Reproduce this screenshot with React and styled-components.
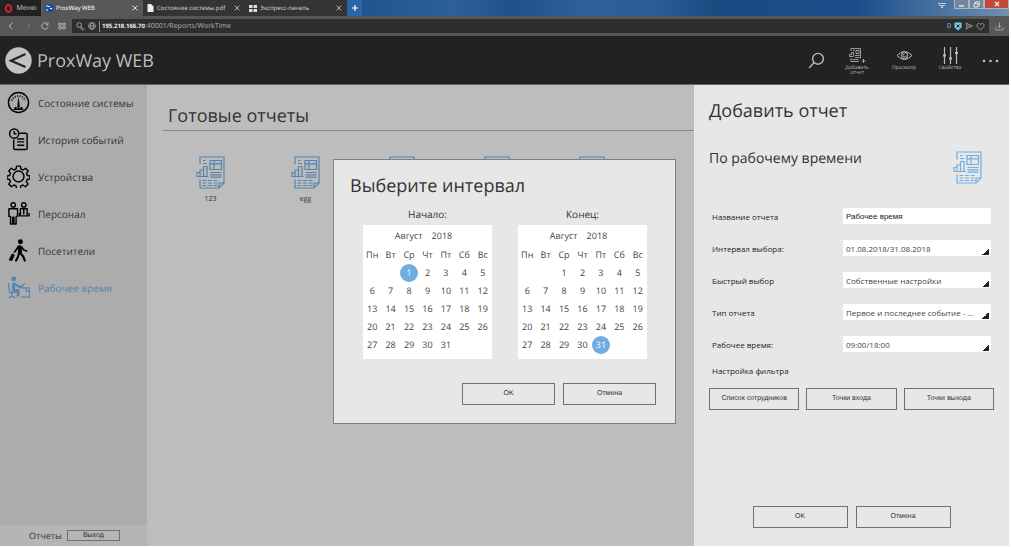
import React, { useState } from "react";
import styled, { createGlobalStyle } from "styled-components";

const GlobalStyle = createGlobalStyle`
    * {
        box-sizing: border-box;
    }
    html, body, #root {
        height: 100%;
        margin: 0;
    }
    body {
        background: #fff;
        color: #333;
        font-family: "Open Sans", "Noto Sans", sans-serif;
        font-size: 10px;
        text-rendering: geometricPrecision;
    }
    button, input, select {
        font-family: inherit;
        color: inherit;
        text-rendering: inherit;
    }
    a {
        color: inherit;
        text-decoration: none;
    }
    svg {
        flex-shrink: 0;
    }
`;

const Window = styled.div`
    display: flex;
    flex-direction: column;
    min-height: 100%;
    padding: 0 2px 1px 0;
`;

/* browser frame */

const TabBar = styled.div`
    display: flex;
    height: 16px;
    background: linear-gradient(90deg, #255e9e 0, #1f5690 36%, #2c6097 45%, #1f5288 51%, #2e6298 58%, #2c5c94 65%, #1a4a80 71%, #1c4e8c 85%, #6f90b2 100%);
    color: #bbb;
    font-family: "Noto Sans", sans-serif;
    font-size: 6px;
`;

const PlainButton = styled.button`
    display: flex;
    align-items: center;
    justify-content: center;
    padding: 0;
    border: 0;
    background: none;
    color: inherit;
`;

const OperaMenu = styled(PlainButton)`
    width: 41px;
    gap: 3px;
    background: #222;
    font-size: 7px;
`;

const Tab = styled.div`
    display: flex;
    align-items: center;
    gap: 3px;
    width: 102px;
    padding: 0 5px 0 4px;
    background: ${({ $active }) => ($active ? "#575757" : "#343434")};
    color: ${({ $active }) => ($active ? "#fff" : "#ccc")};
    white-space: nowrap;

    button {
        margin-left: auto;
    }
`;

const NewTab = styled(PlainButton)`
    width: 15px;
    background: #2b66a8;
    color: #fff;
`;

const WindowControls = styled.div`
    display: flex;
    align-items: flex-start;
    margin-left: auto;
    color: #e5e5e5;
`;

const TabMenu = styled(PlainButton)`
    width: 12px;
    height: 10px;
    margin-right: 6px;
`;

const WindowButton = styled(PlainButton)`
    width: ${({ $close }) => ($close ? "25px" : "15px")};
    height: 9px;
    background: ${({ $close }) => ($close ? "#c4473a" : "#71879f")};
    border: 1px solid #a9b6c4;
    border-top: 0;
`;

const AddressBar = styled.div`
    display: flex;
    align-items: center;
    height: 20px;
    padding: 0 5px 0 2px;
    background: #575757;
    color: #aaa;
`;

const NavButton = styled(PlainButton)`
    width: 17px;
    height: 18px;
    color: ${({ disabled }) => (disabled ? "#777" : "#bbb")};
`;

const Address = styled.div`
    display: flex;
    flex: 1;
    align-items: center;
    gap: 3px;
    height: 14px;
    margin: 0 6px 0 2px;
    padding: 0 4px;
    background: #2d2f2e;
    font-family: "Noto Sans", sans-serif;
    font-size: 7px;

    strong {
        color: #eee;
        font-size: 6px;
    }
    span {
        flex: 1;
        padding-left: 2px;
        border-left: 1px solid #888;
        line-height: 10px;
    }
    em {
        color: #6fc1ea;
        font-style: normal;
    }
`;

/* application */

const Page = styled.div`
    position: relative;
    display: flex;
    flex: 1;
    flex-direction: column;
`;

const Header = styled.header`
    display: flex;
    align-items: center;
    height: 49px;
    padding: 1px 10px 0 5px;
    background: #222;
    border-bottom: 1px solid #666;
    color: #bdbdbd;
`;

const Brand = styled.a`
    display: flex;
    align-items: center;
    gap: 5px;
    margin-right: auto;
    font-size: 18px;
`;

const Tool = styled(PlainButton)`
    flex-direction: column;
    justify-content: flex-start;
    width: ${({ $width }) => $width || "46px"};
    height: 28px;
    gap: 2px;
    font-size: 5px;
    line-height: 5px;
`;

const Search = styled(PlainButton)`
    width: 22px;
    margin-right: 6px;
`;

const More = styled(PlainButton)`
    margin-left: 9px;
`;

const Body = styled.div`
    display: flex;
    flex: 1;
`;

const Sidebar = styled.aside`
    display: flex;
    flex-direction: column;
    width: 147px;
    background: #acacac;
`;

const Menu = styled.nav`
    flex: 1;
    margin-top: -1px;
`;

const MenuItem = styled.a`
    display: flex;
    align-items: center;
    gap: 8px;
    height: 37px;
    padding-left: 7px;
    color: ${({ $active }) => ($active ? "#5583b0" : "#333")};
    font-size: 10px;
    white-space: nowrap;

    svg {
        color: ${({ $active }) => ($active ? "#5583b0" : "#000")};
    }
`;

const SidebarFooter = styled.div`
    display: flex;
    align-items: center;
    gap: 5px;
    height: 21px;
    padding-left: 29px;
    background: #b5b5b5;
    font-size: 9px;
`;

const Content = styled.main`
    flex: 1;
    padding: 17px 0 0 16px;
    background: #bdbdbd;
`;

const ContentTitle = styled.h1`
    margin: 0;
    padding: 0 5px;
    border-bottom: 1px solid #888;
    font-size: 18px;
    font-weight: 400;
    line-height: 28px;
`;

const Reports = styled.div`
    display: grid;
    grid-template-columns: repeat(5, 95px);
    padding-top: 25px;
`;

const Report = styled.a`
    display: flex;
    flex-direction: column;
    align-items: center;
    gap: 6px;
    font-size: 7px;

    svg {
        color: #5583b0;
    }
`;

const Panel = styled.section`
    display: flex;
    flex-direction: column;
    width: 315px;
    padding: 9px 15px 18px;
    background: #e7e7e7;
`;

const PanelTitle = styled.h2`
    margin: 0;
    font-size: 18px;
    font-weight: 400;
    line-height: 34px;
`;

const PanelHead = styled.div`
    display: flex;
    align-items: center;
    justify-content: space-between;
    height: 34px;
    margin-top: 22px;
    padding-right: 12px;

    h3 {
        margin: 0 0 16px;
        font-size: 14px;
        font-weight: 400;
        line-height: 18px;
    }
    svg {
        color: #70acdf;
    }
`;

const Fields = styled.div`
    display: grid;
    gap: 16px;
    margin-top: 24px;
    padding: 0 3px;
    text-rendering: auto;
`;

const Field = styled.div`
    display: grid;
    grid-template-columns: 131px 1fr;
    align-items: center;
    height: 16px;
    color: #222;
    font-size: 8px;
`;

const TextBox = styled.input`
    width: 100%;
    height: 16px;
    padding: 0 3px;
    border: 0;
    background: #fff;
    color: #222;
    font-family: "Liberation Sans", sans-serif;
    font-size: 8px;
`;

const Select = styled.select`
    width: 100%;
    height: 16px;
    padding: 0 10px 0 3px;
    border: 0;
    border-radius: 0;
    appearance: none;
    background: linear-gradient(135deg, transparent 50%, #222 50%) no-repeat right 2px bottom 1px / 7px 7px #fff;
    color: #444;
    font-size: 8px;
    text-overflow: ellipsis;
`;

const FilterTitle = styled.div`
    margin-top: 13px;
    padding-left: 3px;
    color: #222;
    font-size: 8px;
    line-height: 12px;
    text-rendering: auto;
`;

const Filters = styled.div`
    display: grid;
    grid-template-columns: repeat(3, 1fr);
    gap: 7px;
    margin-top: 11px;
`;

const Button = styled.button`
    height: ${({ $small }) => ($small ? "11px" : "22px")};
    width: ${({ $width }) => $width || "auto"};
    padding: 0;
    border: 1px solid #707270;
    background: transparent;
    font-family: "Liberation Sans", sans-serif;
    font-size: 7px;
    line-height: 8px;
`;

const Actions = styled.div`
    display: flex;
    justify-content: ${({ $align }) => $align};
    gap: 8px;
    margin-top: auto;
`;

const Overlay = styled.div`
    position: absolute;
    inset: 0;
    display: flex;
    align-items: center;
    justify-content: center;
`;

const Dialog = styled.div`
    display: flex;
    flex-direction: column;
    width: 343px;
    height: 265px;
    padding: 9px 19px 18px 16px;
    border: 1px solid #808080;
    background: #e7e7e7;
`;

const Calendars = styled.div`
    display: flex;
    gap: 26px;
    margin-top: 2px;
    padding-left: 13px;
`;

const CalendarBox = styled.section`
    width: 129px;

    h3 {
        margin: 0 0 2px;
        font-size: 10px;
        font-weight: 400;
        line-height: 18px;
        text-align: center;
    }
`;

const Month = styled.table`
    width: 100%;
    border-collapse: separate;
    border-spacing: 0;
    border-bottom: 5px solid #fff;
    table-layout: fixed;
    background: #fff;
    color: #444;
    font-size: 9px;
    text-align: center;

    caption {
        height: 21px;
        padding-right: 8px;
        background: #fff;
        line-height: 21px;
    }
    caption span {
        margin-left: 9px;
    }
    th, td {
        height: 18px;
        padding: 0;
        font-weight: 400;
        line-height: 18px;
    }
`;

const Day = styled.button`
    display: block;
    width: 18px;
    height: 18px;
    margin: 0 auto;
    padding: 0;
    border: 0;
    border-radius: 50%;
    background: ${({ $selected }) => ($selected ? "#70acdf" : "transparent")};
    color: ${({ $selected }) => ($selected ? "#fff" : "#444")};
    font-size: 9px;
    line-height: 18px;
`;

/* icons */

const Line = ({ size, width = 1.5, box = 24, children }) => (
    <svg width={size} height={size} viewBox={`0 0 ${box} ${box}`} fill="none" stroke="currentColor" strokeWidth={width} aria-hidden="true">
        {children}
    </svg>
);

const CrossIcon = () => <Line size={6} box={6} width={0.8}><path d="M.6.6l4.8 4.8M5.4.6L.6 5.4" /></Line>;

const ReportIcon = () => (
    <svg width="29" height="33" viewBox="0 0 29 33" fill="none" stroke="currentColor" strokeWidth="1.200" aria-hidden="true">
        <path d="M4 8.500V1h24v26l-5 5H4v-8.500M28 27h-5v5" />
        <path d="M7 4.500h2.500M7 7.500h4M14 4.500h11.500v9H14zM18 4.500v9M14 7.800h11.500" />
        <path d="M1 20.500v-4h3v4M4 20.500V14h3.500v6.500M7.500 20.500v-10h3.500v10M.5 20.500h12" />
        <path d="M14.500 16.500h11M14.500 18.800h11M14.500 21.200h11" />
        <path d="M6.500 24.500h15M6.500 27h15M6.500 29.500h15" strokeDasharray="4 1.500" />
    </svg>
);

const GaugeIcon = () => (
    <Line size={23}>
        <circle cx="12" cy="12" r="10.500" />
        <path d="M5 10a7.500 7.500 0 0 1 14 0" strokeDasharray="1 1.500" strokeWidth="2" />
        <path d="M12 6l1.400 11h-2.800z" fill="currentColor" stroke="none" />
        <path d="M7 19h10M8 17.500h2M14 17.500h2M12 16v3" />
    </Line>
);

const HistoryIcon = () => (
    <Line size={23}>
        <circle cx="7.500" cy="5.800" r="4.800" />
        <path d="M7.500 3v3H10M13 5.500h6.500a1.500 1.500 0 0 1 1.500 1.500v14a1.500 1.500 0 0 1-1.500 1.500h-11A1.500 1.500 0 0 1 7 21v-9M10.500 11.500h7.500M10.500 14.500h7.500M10.500 18h7.500" />
    </Line>
);

const GearIcon = () => (
    <Line size={23}>
        <circle cx="12" cy="12" r="5.700" />
        <path strokeLinejoin="round" d="M10 1.200h4l.6 3 2.200 1 2.600-1.800 2.800 2.800-1.800 2.600.9 2.200 2.700.5v3l-2.900.7-.9 2.100 1.800 2.600-2.800 2.800-2.600-1.800-2.100.9-.5 2.900h-4l-.6-2.900-2.200-.9-2.600 1.800-2.800-2.800 1.800-2.600-.9-2.100-2.700-.7v-3l2.700-.5.9-2.200-1.800-2.600 2.800-2.800 2.600 1.800 2.200-1z" />
    </Line>
);

const StaffIcon = () => (
    <Line size={23}>
        <circle cx="6.500" cy="3" r="2.300" />
        <path d="M2 7h9v8H9.500v8H7.200v-7H6v7H3.700v-8H2z" strokeLinejoin="round" />
        <circle cx="17.500" cy="3" r="2.300" />
        <path d="M14 13.500V7h7v6.500M12 14.500h11.500M17.500 7v6M13 11.500v3M23 11.500v3" />
    </Line>
);

const VisitorIcon = () => (
    <svg width="23" height="23" viewBox="0 0 24 24" fill="none" stroke="currentColor" strokeLinecap="round" strokeLinejoin="round" aria-hidden="true">
        <circle cx="14" cy="2.800" r="2.600" fill="currentColor" stroke="none" />
        <path d="M13.500 8.500v5.500" strokeWidth="4" />
        <path d="M12 7.500L8.500 13M15.500 8.500l2 3 3 1" strokeWidth="1.800" />
        <path d="M12.500 15l-1 3.500-2 4M14 15l2.800 3 1.800 4.500" strokeWidth="2.200" />
        <path d="M5.500 16.500l-2.500 5M7 17l-2.500 5" strokeWidth="2" />
        <path d="M7 14.500l1.500-2" />
    </svg>
);

const DeskIcon = () => (
    <svg width="23" height="23" viewBox="0 0 24 24" fill="none" stroke="currentColor" strokeLinejoin="round" aria-hidden="true">
        <circle cx="7" cy="3" r="2.500" fill="currentColor" stroke="none" />
        <path d="M7 7v8h4.500v6.500" strokeWidth="3" />
        <path d="M8 8l4 3h4" strokeWidth="2" />
        <path d="M1.500 7.500l1.200 9.500H9M5 17v5M1.500 23l3.500-2 3.500 2" strokeWidth="1.300" />
        <path d="M16 10.500l2.500-3M13 12.500h10.500v9.500H15M20 12.500v3.500h3.500" strokeWidth="1.300" />
    </svg>
);

const menu = [
    { title: "Состояние системы", Icon: GaugeIcon },
    { title: "История событий", Icon: HistoryIcon },
    { title: "Устройства", Icon: GearIcon },
    { title: "Персонал", Icon: StaffIcon },
    { title: "Посетители", Icon: VisitorIcon },
    { title: "Рабочее время", Icon: DeskIcon, active: true },
];

const reports = ["123", "egg", "", "", ""];

const selects = [
    { id: "interval", label: "Интервал выбора:", value: "01.08.2018/31.08.2018" },
    { id: "quick", label: "Быстрый выбор", value: "Собственные настройки" },
    { id: "type", label: "Тип отчета", value: "Первое и последнее событие - ..." },
    { id: "hours", label: "Рабочее время:", value: "09:00/18:00" },
];

const weekDays = ["Пн", "Вт", "Ср", "Чт", "Пт", "Сб", "Вс"];

// August 2018 starts on Wednesday
const weeks = [0, 1, 2, 3, 4].map((week) =>
    weekDays.map((_, i) => {
        const day = week * 7 + i - 1;
        return day > 0 && day < 32 ? day : null;
    })
);

const Calendar = ({ title, initial }) => {
    const [selected, setSelected] = useState(initial);
    return (
        <CalendarBox>
            <h3>{title}</h3>
            <Month>
                <caption>Август<span>2018</span></caption>
                <thead>
                    <tr>{weekDays.map((d) => <th key={d} scope="col">{d}</th>)}</tr>
                </thead>
                <tbody>
                    {weeks.map((days, i) => (
                        <tr key={i}>
                            {days.map((day, j) => (
                                <td key={j}>
                                    {day && (
                                        <Day $selected={day === selected} onClick={() => setSelected(day)}>
                                            {day}
                                        </Day>
                                    )}
                                </td>
                            ))}
                        </tr>
                    ))}
                </tbody>
            </Month>
        </CalendarBox>
    );
};

const Browser = () => (
    <>
        <TabBar>
            <OperaMenu>
                <svg width="9" height="9" viewBox="0 0 9 9" fill="none" stroke="#d81f35" strokeWidth="2" aria-hidden="true">
                    <ellipse cx="4.500" cy="4.500" rx="2.800" ry="3.400" />
                </svg>
                Меню
            </OperaMenu>
            <Tab $active>
                <svg width="8" height="8" viewBox="0 0 8 8" aria-hidden="true">
                    <path fill="#1d4f9b" d="M0 0h8v8H0z" />
                    <path d="M2 1v2M2 5v2M3 2.500h2M5 4.500h2" stroke="#fff" />
                </svg>
                ProxWay WEB
                <PlainButton aria-label="Закрыть вкладку"><CrossIcon /></PlainButton>
            </Tab>
            <Tab>
                <svg width="7" height="8" viewBox="0 0 7 8" aria-hidden="true">
                    <path fill="#eee" d="M.5 0H4l2.500 2.500V8h-6z" />
                </svg>
                Состояние системы.pdf
                <PlainButton aria-label="Закрыть вкладку"><CrossIcon /></PlainButton>
            </Tab>
            <Tab>
                <svg width="8" height="7" viewBox="0 0 8 7" fill="#ddd" aria-hidden="true">
                    <path d="M0 0h3.500v3H0zM4.500 0H8v3H4.500zM0 4h3.500v3H0zM4.500 4H8v3H4.500z" />
                </svg>
                Экспресс-панель
                <PlainButton aria-label="Закрыть вкладку"><CrossIcon /></PlainButton>
            </Tab>
            <NewTab aria-label="Новая вкладка">
                <Line size={6} box={6} width={1.2}><path d="M3 0v6M0 3h6" /></Line>
            </NewTab>
            <WindowControls>
                <TabMenu aria-label="Меню вкладок">
                    <Line size={8} box={8} width={0.8}><path d="M0 2.500h8M1 4.500h6M3 6h2L4 7z" /></Line>
                </TabMenu>
                <WindowButton aria-label="Свернуть">
                    <Line size={7} box={7}><path d="M1 5h5" /></Line>
                </WindowButton>
                <WindowButton aria-label="Развернуть">
                    <Line size={7} box={7} width={1}><path d="M1 2.500h4v3.500H1zM2.500 2V.8H6.300V4.500H5" /></Line>
                </WindowButton>
                <WindowButton $close aria-label="Закрыть">
                    <Line size={6} box={6}><path d="M1 1l4 4M5 1L1 5" /></Line>
                </WindowButton>
            </WindowControls>
        </TabBar>
        <AddressBar>
            <NavButton aria-label="Назад"><Line size={8} box={8} width={1}><path d="M5.500.8L2 4l3.500 3.200" /></Line></NavButton>
            <NavButton disabled aria-label="Вперед"><Line size={8} box={8} width={1}><path d="M2.500.8L6 4 2.500 7.200" /></Line></NavButton>
            <NavButton aria-label="Обновить"><Line size={8} box={8} width={1}><path d="M7 5A3.200 3.200 0 1 1 6.500 2M7 .5v2.300H4.800" /></Line></NavButton>
            <NavButton aria-label="Экспресс-панель"><Line size={8} box={8} width={0.9}><path d="M.8 1.200h2.500v2H.8zM4.800 1.200h2.500v2H4.800zM.8 4.800h2.500v2H.8zM4.800 4.800h2.500v2H4.800z" /></Line></NavButton>
            <Address>
                <Line size={9} box={9} width={0.9}><circle cx="3.200" cy="3" r="2.300" /><path d="M5 4.500L8.500 8M4 5.500l3 2.800" /></Line>
                <Line size={8} box={8} width={0.8}><circle cx="4" cy="4" r="3.400" /><ellipse cx="4" cy="4" rx="1.500" ry="3.400" /><path d="M.5 4h7" /></Line>
                <span><strong>195.218.166.70</strong>:40001/Reports/WorkTime</span>
                <em>0</em>
                <svg width="8" height="9" viewBox="0 0 8 9" aria-hidden="true">
                    <path fill="#7cc7ee" d="M.5.5h7v5L4 8.500.5 5.500z" />
                    <path d="M2.500 2.500l3 3M5.500 2.500l-3 3" stroke="#223" />
                </svg>
                <Line size={8} box={8} width={0.8}><path d="M1 1l6.500 3L1 7l1-3zM2 4h3" /></Line>
                <Line size={9} box={9} width={0.8}><path d="M4.500 8L1.200 4.500C0 2.800 2.500-.2 4.500 2.500 6.500-.2 9 2.800 7.800 4.500z" /></Line>
            </Address>
            <PlainButton aria-label="Загрузки">
                <Line size={9} box={9} width={0.9}><path d="M4.500.5v5M2.500 3.800l2 2 2-2M.8 5.500V8h7.400V5.500" /></Line>
            </PlainButton>
        </AddressBar>
    </>
);

const AppHeader = () => (
    <Header>
        <Brand href="#">
            <svg width="27" height="27" viewBox="0 0 27 27" aria-hidden="true">
                <circle cx="13.500" cy="13.500" r="13.200" fill="#c2c2c2" />
                <path d="M20.500 7L6 13.800l14.500 6.200" fill="none" stroke="#222" strokeWidth="2.200" />
            </svg>
            ProxWay WEB
        </Brand>
        <Search aria-label="Поиск">
            <Line size={17} box={17} width={1.4}><circle cx="10" cy="6.800" r="5.400" /><path d="M6 10.500L1.200 16" /></Line>
        </Search>
        <Tool $width="48px">
            <svg width="18" height="17" viewBox="0 0 18 17" fill="none" stroke="currentColor" strokeWidth=".8" aria-hidden="true">
                <path d="M3 4V1.500h9.500v10M3 11v3.500h8M5 3.500h2M8 3.500h3v3H8zM1.500 9.500V7.500h2v-2h2v4zM7 8.500h4.500M7 10.500h4.500M4.500 12.500h6M15.500 12v4M13.500 14h4" />
            </svg>
            <span>Добавить<br />отчет</span>
        </Tool>
        <Tool>
            <svg width="17" height="17" viewBox="0 0 17 17" fill="none" stroke="currentColor" aria-hidden="true">
                <path d="M1 8.500q7.500-8 15 0-7.500 8-15 0z" />
                <circle cx="8.500" cy="8.500" r="3.200" />
                <path d="M8.500 7a1.500 1.500 0 1 0 1.500 1.500" />
            </svg>
            Просмотр
        </Tool>
        <Tool>
            <svg width="17" height="17" viewBox="0 0 17 17" fill="none" stroke="currentColor" strokeWidth="1.200" aria-hidden="true">
                <path d="M2.500 0v17M8.500 0v17M14.500 0v17" />
                <path d="M1 8.500h3M7 11.500h3M13 6h3" strokeWidth="2" />
            </svg>
            Свойства
        </Tool>
        <More aria-label="Еще">
            <svg width="17" height="4" viewBox="0 0 17 4" fill="currentColor" aria-hidden="true">
                <circle cx="2" cy="2" r="1.300" /><circle cx="8.500" cy="2" r="1.300" /><circle cx="15" cy="2" r="1.300" />
            </svg>
        </More>
    </Header>
);

const ReportPanel = () => (
    <Panel>
        <PanelTitle>Добавить отчет</PanelTitle>
        <PanelHead>
            <h3>По рабочему времени</h3>
            <ReportIcon />
        </PanelHead>
        <Fields>
            <Field>
                <label htmlFor="name">Название отчета</label>
                <TextBox id="name" defaultValue="Рабочее время" />
            </Field>
            {selects.map(({ id, label, value }) => (
                <Field key={id}>
                    <label htmlFor={id}>{label}</label>
                    <Select id={id}>
                        <option>{value}</option>
                    </Select>
                </Field>
            ))}
        </Fields>
        <FilterTitle>Настройка фильтра</FilterTitle>
        <Filters>
            <Button>Список сотрудников</Button>
            <Button>Точки входа</Button>
            <Button>Точки выхода</Button>
        </Filters>
        <Actions $align="center">
            <Button $width="95px">OK</Button>
            <Button $width="95px">Отмена</Button>
        </Actions>
    </Panel>
);

const App = () => (
    <Window>
        <GlobalStyle />
        <Browser />
        <Page>
            <AppHeader />
            <Body>
                <Sidebar>
                    <Menu>
                        {menu.map(({ title, Icon, active }) => (
                            <MenuItem key={title} href="#" $active={active}>
                                <Icon />
                                {title}
                            </MenuItem>
                        ))}
                    </Menu>
                    <SidebarFooter>
                        Отчеты
                        <Button $small $width="53px">Выход</Button>
                    </SidebarFooter>
                </Sidebar>
                <Content>
                    <ContentTitle>Готовые отчеты</ContentTitle>
                    <Reports>
                        {reports.map((name, i) => (
                            <Report key={i} href="#">
                                <ReportIcon />
                                {name}
                            </Report>
                        ))}
                    </Reports>
                </Content>
                <ReportPanel />
            </Body>
            <Overlay>
                <Dialog role="dialog" aria-label="Выберите интервал">
                    <PanelTitle>Выберите интервал</PanelTitle>
                    <Calendars>
                        <Calendar title="Начало:" initial={1} />
                        <Calendar title="Конец:" initial={31} />
                    </Calendars>
                    <Actions $align="flex-end">
                        <Button $width="93px">OK</Button>
                        <Button $width="93px">Отмена</Button>
                    </Actions>
                </Dialog>
            </Overlay>
        </Page>
    </Window>
);

export default App;
